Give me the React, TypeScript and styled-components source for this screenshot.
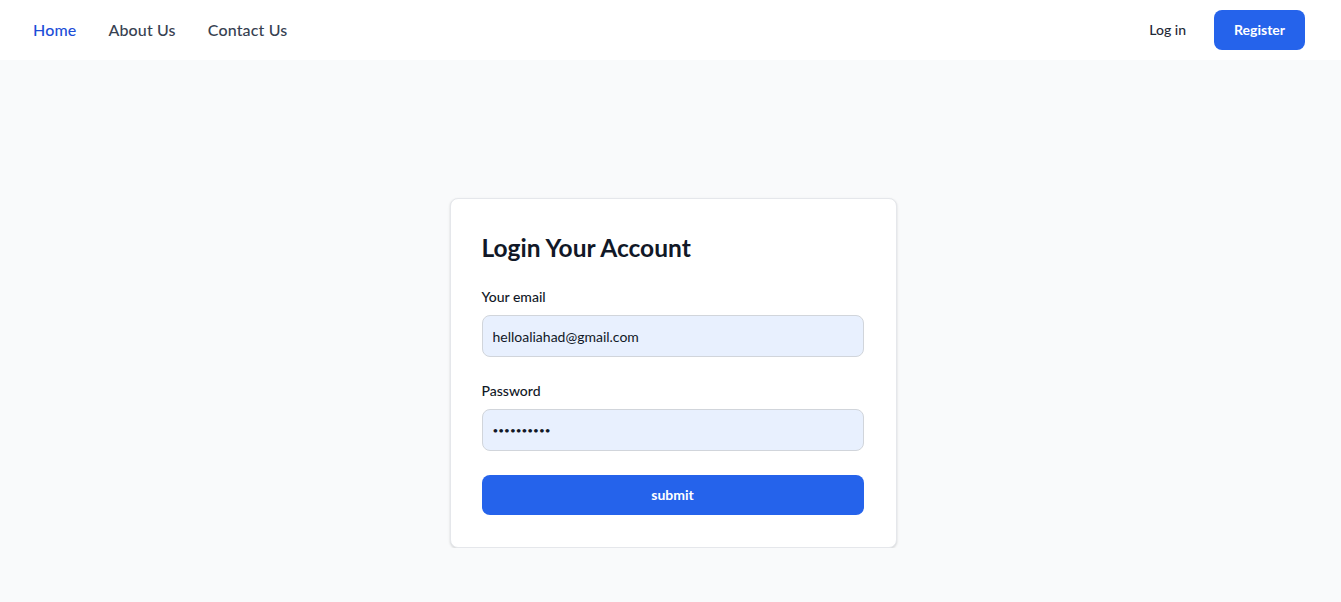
import React from 'react';
import styled, { createGlobalStyle } from 'styled-components';

const GlobalStyle = createGlobalStyle`
  * {
    box-sizing: border-box;
  }

  body {
    margin: 0;
    background-color: #f9fafb;
    font-family: Lato, 'Noto Sans', sans-serif;
    color: #111827;
  }
`;

const Nav = styled.nav`
  height: 60px;
  background-color: #ffffff;
  display: flex;
  align-items: center;
  justify-content: space-between;
  padding: 0 36px 0 17px;
`;

const NavLinks = styled.ul`
  list-style: none;
  margin: 0;
  padding: 0;
  display: flex;
  align-items: center;
`;

const NavLink = styled.a<{ $active?: boolean }>`
  display: block;
  padding: 8px 16px;
  font-size: 16px;
  line-height: 24px;
  font-weight: 500;
  letter-spacing: 0.15px;
  text-decoration: none;
  color: ${({ $active }) => ($active ? '#1d4ed8' : '#374151')};
`;

const Actions = styled.div`
  display: flex;
  align-items: center;
  gap: 12px;
`;

const LoginLink = styled.a`
  padding: 10px 16px;
  font-size: 14px;
  line-height: 20px;
  font-weight: 500;
  color: #1f2937;
  text-decoration: none;
`;

const RegisterButton = styled.a`
  display: block;
  padding: 10px 20px;
  font-size: 14px;
  line-height: 20px;
  font-weight: 700;
  color: #ffffff;
  background-color: #2563eb;
  border-radius: 8px;
  text-decoration: none;
`;

const Main = styled.main`
  display: flex;
  justify-content: center;
  padding-top: 138px;
  padding-left: 5px;
`;

const Card = styled.div`
  width: 447px;
  background-color: #ffffff;
  border: 1px solid #e5e7eb;
  border-radius: 8px;
  box-shadow: 0 1px 3px rgba(0, 0, 0, 0.1), 0 1px 2px rgba(0, 0, 0, 0.06);
  padding: 32px 32px 32px 31px;
`;

const Title = styled.h1`
  margin: 0;
  padding-top: 1px;
  font-size: 24.5px;
  line-height: 31px;
  font-weight: 700;
  color: #111827;
`;

const Form = styled.form`
  margin-top: 24px;
  display: flex;
  flex-direction: column;
  gap: 24px;
`;

const Label = styled.label`
  display: block;
  margin-bottom: 8px;
  font-size: 14px;
  line-height: 20px;
  font-weight: 500;
  color: #111827;
`;

const Input = styled.input<{ $masked?: boolean }>`
  display: block;
  width: 100%;
  padding: 10px;
  font-family: inherit;
  font-size: ${({ $masked }) => ($masked ? '10px' : '14px')};
  line-height: 20px;
  height: 42px;
  color: #111827;
  background-color: #e8f0fe;
  border: 1px solid #d1d5db;
  border-radius: 8px;
  outline: none;
`;

const SubmitButton = styled.button`
  width: 100%;
  padding: 10px 20px;
  font-family: inherit;
  font-size: 14px;
  line-height: 20px;
  font-weight: 700;
  color: #ffffff;
  background-color: #2563eb;
  border: none;
  border-radius: 8px;
  cursor: pointer;
`;

const App: React.FC = () => {
  return (
    <>
      <GlobalStyle />
      <Nav>
        <NavLinks>
          <li>
            <NavLink href="#" $active>
              Home
            </NavLink>
          </li>
          <li>
            <NavLink href="#">About Us</NavLink>
          </li>
          <li>
            <NavLink href="#">Contact Us</NavLink>
          </li>
        </NavLinks>
        <Actions>
          <LoginLink href="#">Log in</LoginLink>
          <RegisterButton href="#">Register</RegisterButton>
        </Actions>
      </Nav>
      <Main>
        <Card>
          <Title>Login Your Account</Title>
          <Form onSubmit={(e) => e.preventDefault()}>
            <div>
              <Label htmlFor="email">Your email</Label>
              <Input id="email" type="email" defaultValue="helloaliahad@gmail.com" />
            </div>
            <div>
              <Label htmlFor="password">Password</Label>
              <Input id="password" type="password" $masked defaultValue="••••••••••" />
            </div>
            <SubmitButton type="submit">submit</SubmitButton>
          </Form>
        </Card>
      </Main>
    </>
  );
};

export default App;
